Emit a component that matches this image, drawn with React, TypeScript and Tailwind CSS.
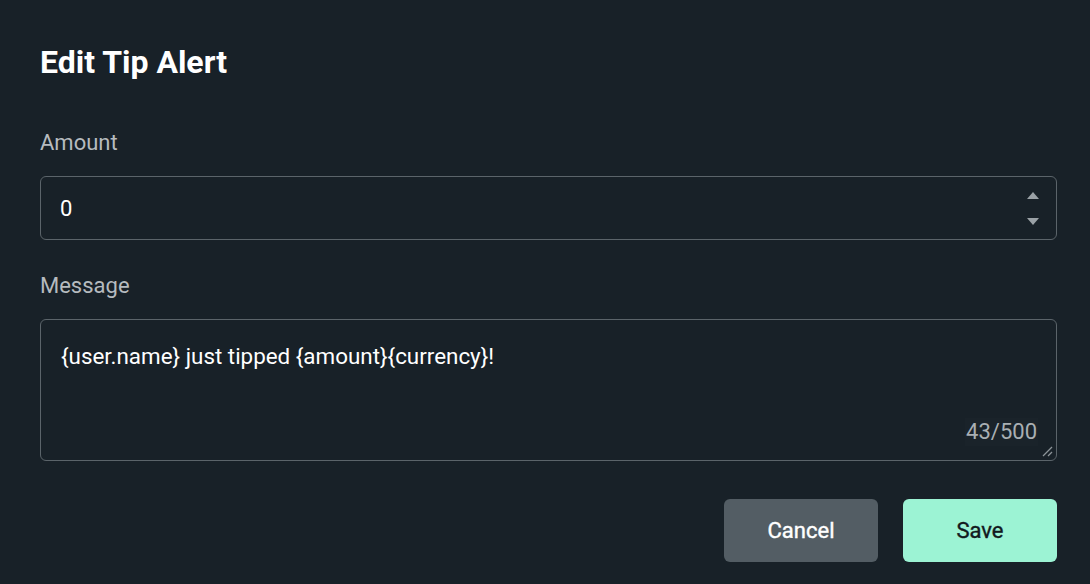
import * as React from 'react'

const font = { fontFamily: 'Roboto, "Noto Sans", sans-serif' }

function Spinner() {
  return (
    <div className="flex flex-col items-center gap-[19px]">
      <svg width="12" height="7" viewBox="0 0 12 7">
        <path d="M6 0 L12 7 L0 7 Z" fill="#9aa1a6" />
      </svg>
      <svg width="12" height="7" viewBox="0 0 12 7">
        <path d="M0 0 L12 0 L6 7 Z" fill="#9aa1a6" />
      </svg>
    </div>
  )
}

function ResizeGrip() {
  return (
    <svg width="12" height="12" viewBox="0 0 12 12" className="absolute bottom-[3px] right-[3px]">
      <path d="M11 2 L2 11" stroke="#8d9499" strokeWidth="1.3" />
      <path d="M11 7 L7 11" stroke="#8d9499" strokeWidth="1.3" />
    </svg>
  )
}

export default function App() {
  return (
    <div className="h-[584px] w-[1090px] bg-[#182128] pl-[40px] pr-[33px] pt-[44px]" style={font}>
      <h1 className="text-[32px] font-bold leading-[36px] text-white">Edit Tip Alert</h1>

      <div className="mt-[49px] flex flex-col">
        <label className="text-[22px] leading-[28px] text-[#b6bbbf]">Amount</label>
        <div className="mt-[19px] flex h-[64px] items-center justify-between rounded-[6px] border border-[#5b646a] pl-[19px] pr-[17px]">
          <span className="text-[22px] text-white">0</span>
          <Spinner />
        </div>
      </div>

      <div className="mt-[32px] flex flex-col">
        <label className="text-[22px] leading-[28px] text-[#b6bbbf]">Message</label>
        <div className="relative mt-[19px] h-[142px] rounded-[6px] border border-[#5b646a] px-[20px] pt-[20px]">
          <p className="text-[22.4px] leading-[32px] text-white">
            {'{user.name} just tipped {amount}{currency}!'}
          </p>
          <span className="absolute bottom-[14px] right-[18px] bg-[#1a232a] px-[1px] text-[22px] leading-[28px] text-[#a9afb3]">
            43/500
          </span>
          <ResizeGrip />
        </div>
      </div>

      <div className="mt-[38px] flex justify-end gap-[25px]">
        <button className="h-[63px] w-[154px] rounded-[6px] bg-[#535d64] text-[22px] font-normal text-white [-webkit-text-stroke:0.4px_white]">
          Cancel
        </button>
        <button className="h-[63px] w-[154px] rounded-[6px] bg-[#9cf3d4] text-[22px] font-normal text-[#12191d] [-webkit-text-stroke:0.4px_#12191d]">
          Save
        </button>
      </div>
    </div>
  )
}
